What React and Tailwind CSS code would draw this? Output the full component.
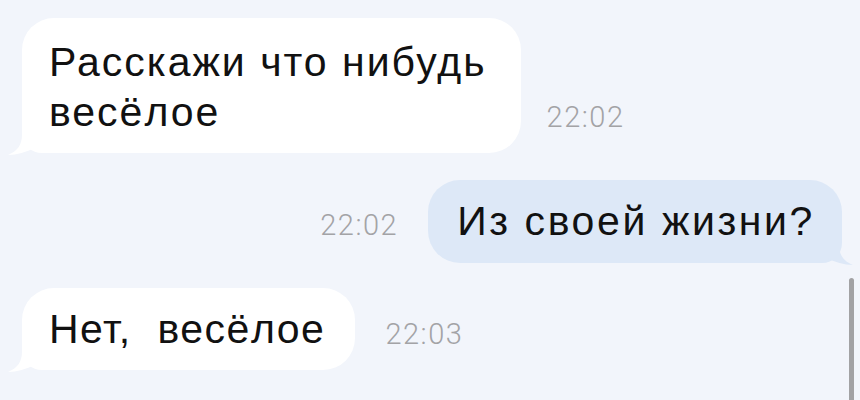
import React from "react";

// Little curved tail that sits at the lower corner of a chat bubble.
function Tail({ side, color }) {
  const pos = side === "left" ? "left-[-14px]" : "right-[-11px] -scale-x-100";
  return (
    <svg
      className={`absolute bottom-[-2px] ${pos}`}
      width="40"
      height="42"
      viewBox="0 0 40 42"
      aria-hidden="true"
    >
      <path
        d="M14 10 L14 22 C14 31 10 38 0 42 C9 42 18 39 27 35 L27 10 Z"
        fill={color}
      />
    </svg>
  );
}

function Bubble({ side, children, className }) {
  const incoming = side === "left";
  const bg = incoming ? "#ffffff" : "#dde8f7";
  return (
    <div
      className={`relative rounded-[32px] ${
        incoming ? "rounded-bl-[20px] bg-[#ffffff]" : "rounded-br-[20px] bg-[#dde8f7]"
      } text-[41px] leading-[50px] text-[#111111] ${className}`}
    >
      <Tail side={side} color={bg} />
      <div className="relative">{children}</div>
    </div>
  );
}

function Time({ children, className }) {
  return (
    <span
      className={`text-[29px] leading-[28px] font-light tracking-[1.5px] text-[#a3a3a6] ${className}`}
      style={{ fontFamily: "Roboto, 'Liberation Sans', sans-serif" }}
    >
      {children}
    </span>
  );
}

export default function App() {
  return (
    <div
      className="relative w-[860px] h-[400px] overflow-hidden bg-[#f2f5fb] pt-[18px] flex flex-col"
      style={{ fontFamily: "'Liberation Sans', Arial, sans-serif" }}
    >
      <div className="flex items-end pl-[22px]">
        <Bubble side="left" className="pl-[27px] pr-[34px] pt-[19px] pb-[16px] tracking-[2px]">
          Расскажи что нибудь
          <br />
          весёлое
        </Bubble>
        <Time className="ml-[26px] mb-[22px]">22:02</Time>
      </div>

      <div className="mt-[27px] flex items-end justify-end pr-[18px]">
        <Time className="mr-[30px] mb-[24px]">22:02</Time>
        <Bubble side="right" className="pl-[29px] pr-[27px] pt-[16px] pb-[17px] tracking-[2.6px]">
          Из своей жизни?
        </Bubble>
      </div>

      <div className="mt-[25px] flex items-end pl-[22px]">
        <Bubble side="left" className="pl-[27px] pr-[30px] pt-[16px] pb-[16px] whitespace-pre tracking-[1.5px]">
          {"Нет,  весёлое"}
        </Bubble>
        <Time className="ml-[30px] mb-[22px]">22:03</Time>
      </div>

      {/* scroll indicator */}
      <div className="absolute right-[6px] top-[278px] w-[5px] h-[130px] rounded-full bg-[#a2a2a4]" />
    </div>
  );
}
